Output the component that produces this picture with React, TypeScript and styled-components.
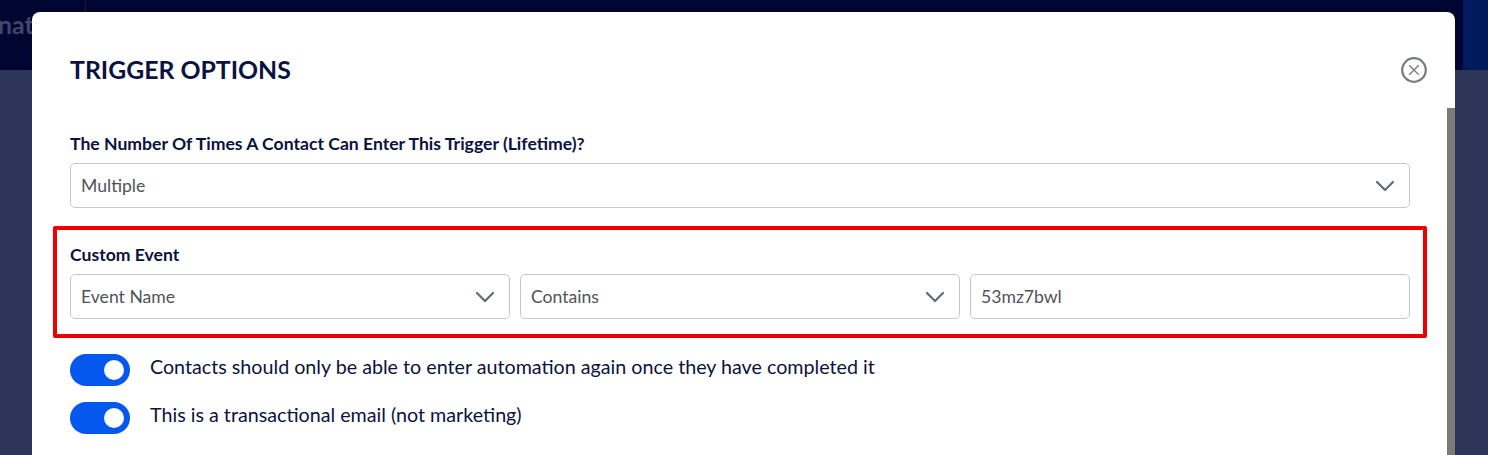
import React from 'react'
import styled, { createGlobalStyle } from 'styled-components'

const GlobalStyle = createGlobalStyle`
  html, body {
    margin: 0;
    padding: 0;
    height: 100%;
    overflow: hidden;
    font-family: "Lato", "Liberation Sans", sans-serif;
  }
`

const Chevron = () => (
  <svg width="20" height="12" viewBox="0 0 20 12" fill="none">
    <path d="M2 2l8 8 8-8" stroke="#5f6b76" strokeWidth="2.2" strokeLinecap="round" strokeLinejoin="round" />
  </svg>
)

const CloseIcon = () => (
  <svg width="26" height="26" viewBox="0 0 26 26" fill="none">
    <circle cx="13" cy="13" r="11.8" stroke="#777b7c" strokeWidth="2.2" />
    <path d="M8.2 8.2l9.6 9.6M17.8 8.2l-9.6 9.6" stroke="#777b7c" strokeWidth="1.3" />
  </svg>
)

const SelectBox: React.FC<{ value: string }> = ({ value }) => (
  <Field>
    {value}
    <Chevron />
  </Field>
)

const App: React.FC = () => {
  return (
    <Page>
      <GlobalStyle />
      <TopBar>
        <BarTitle>nat</BarTitle>
        <BarDivider />
        <BarCorner />
      </TopBar>
      <Backdrop />
      <Modal>
        <ModalHeader>
          <Title>TRIGGER OPTIONS</Title>
          <CloseButton>
            <CloseIcon />
          </CloseButton>
        </ModalHeader>
        <Label>The Number Of Times A Contact Can Enter This Trigger (Lifetime)?</Label>
        <SelectBox value="Multiple" />
        <Highlight>
          <Label>Custom Event</Label>
          <FieldRow>
            <SelectBox value="Event Name" />
            <SelectBox value="Contains" />
            <Field>53mz7bwl</Field>
          </FieldRow>
        </Highlight>
        <ToggleRow>
          <Toggle />
          <ToggleText>Contacts should only be able to enter automation again once they have completed it</ToggleText>
        </ToggleRow>
        <ToggleRow>
          <Toggle />
          <ToggleText>This is a transactional email (not marketing)</ToggleText>
        </ToggleRow>
        <Scrollbar />
      </Modal>
    </Page>
  )
}

export default App

const Page = styled.div`
  position: relative;
  width: 1488px;
  height: 455px;
  overflow: hidden;
  display: flex;
  flex-direction: column;
`
const TopBar = styled.header`
  height: 70px;
  background: #000631;
  display: flex;
  align-items: flex-start;
`
const BarTitle = styled.div`
  width: 85px;
  margin: 13px 0 0 -2px;
  font-size: 24.8px;
  font-weight: 700;
  line-height: 24px;
  color: #41466a;
`
const BarDivider = styled.div`
  width: 1px;
  height: 70px;
  margin-left: 2px;
  background: #14193f;
`
const BarCorner = styled.div`
  width: 25px;
  height: 70px;
  margin-left: auto;
  background: #001a5e;
`
const Backdrop = styled.div`
  flex: 1;
  background: #2d3558;
`
const Modal = styled.section`
  position: absolute;
  left: 32px;
  top: 12px;
  width: 1423px;
  height: 460px;
  box-sizing: border-box;
  padding: 41px 45px 0 38px;
  background: #fff;
  border-radius: 8px 8px 0 0;
  overflow: hidden;
`
const ModalHeader = styled.div`
  display: flex;
  align-items: center;
  justify-content: space-between;
  height: 34px;
  margin-bottom: 47px;
  margin-right: -17px;
`
const Title = styled.h2`
  margin: 0;
  font-size: 24.8px;
  font-weight: 700;
  line-height: 34px;
  color: #0b1240;
`
const CloseButton = styled.div`
  display: flex;
  width: 26px;
  height: 26px;
`
const Label = styled.div`
  font-size: 17.6px;
  font-weight: 700;
  line-height: 20px;
  margin-bottom: 9px;
  color: #0b1240;
`
const Field = styled.div`
  flex: 1;
  height: 45px;
  box-sizing: border-box;
  padding: 0 14px 0 10px;
  display: flex;
  align-items: center;
  justify-content: space-between;
  border: 1px solid #c4c7cb;
  border-radius: 5px;
  font-size: 17.6px;
  color: #4f545b;
`
const Highlight = styled.div`
  margin: 18px -17px 0;
  padding: 15px 13px;
  border: 4px solid #ee0000;
  border-radius: 2px;
  height: 112px;
  box-sizing: border-box;
`
const FieldRow = styled.div`
  display: flex;
  gap: 10px;
`
const ToggleRow = styled.div`
  display: flex;
  align-items: center;
  gap: 20px;
  height: 32px;
  margin-top: 16px;
`
const Toggle = styled.span`
  position: relative;
  flex: none;
  width: 60px;
  height: 32px;
  border-radius: 16px;
  background: #0558ee;

  &::after {
    content: "";
    position: absolute;
    right: 6px;
    top: 6px;
    width: 20px;
    height: 20px;
    border-radius: 50%;
    background: #fff;
  }
`
const ToggleText = styled.span`
  font-size: 19.7px;
  line-height: 26px;
  margin-top: -6px;
  color: #0b1240;
`
const Scrollbar = styled.div`
  position: absolute;
  right: 0;
  top: 96px;
  bottom: 0;
  width: 8px;
  background: #7a7a78;
`
